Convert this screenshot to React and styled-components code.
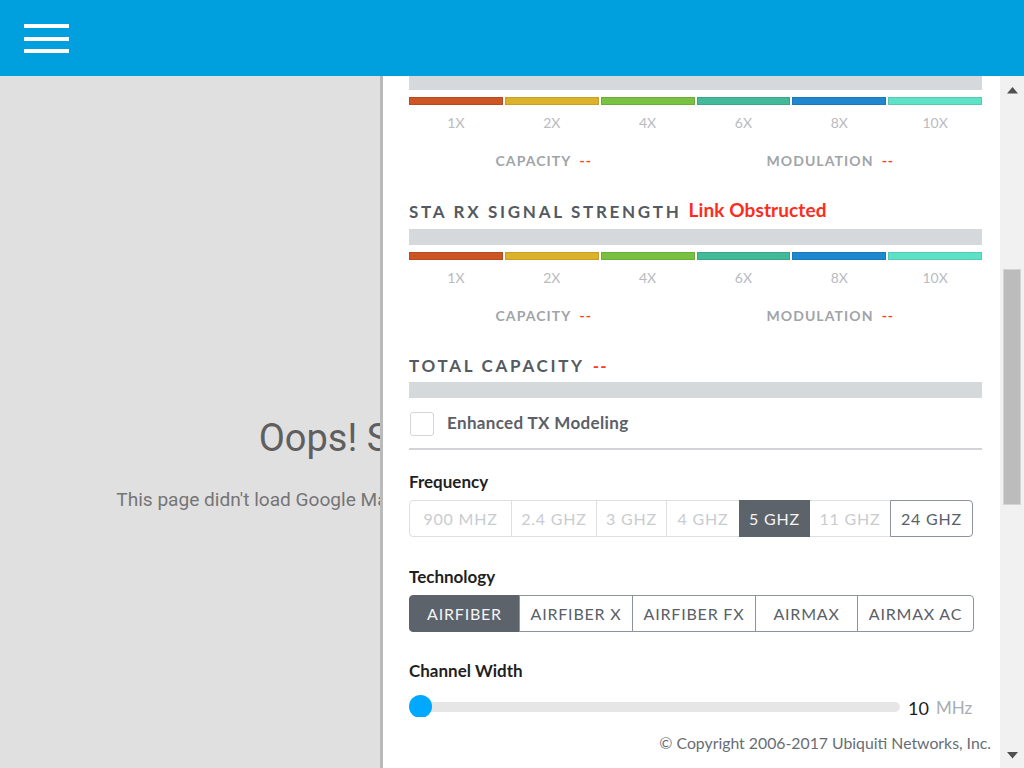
import React from 'react';
import styled, { createGlobalStyle } from 'styled-components';

const Global = createGlobalStyle`
  html, body { margin: 0; padding: 0; }
  body {
    width: 1024px; height: 768px; overflow: hidden;
    font-family: Lato, "Noto Sans", sans-serif;
    -webkit-font-smoothing: antialiased;
  }
  * { box-sizing: border-box; }
`;

const Page = styled.div`
  width: 1024px;
  height: 768px;
  display: flex;
  flex-direction: column;
  overflow: hidden;
  background: #e0e0e0;
`;

const TopBar = styled.header`
  flex: none;
  height: 76px;
  background: #009fde;
  padding: 24px 0 0 24px;
`;

const Burger = styled.div`
  display: flex;
  flex-direction: column;
  gap: 8.7px;
  width: 45px;
`;

const BurgerLine = styled.span`
  display: block;
  height: 4px;
  background: #ffffff;
`;

const Stage = styled.main`
  flex: 1;
  min-height: 0;
  display: flex;
`;

const MapView = styled.section`
  flex: none;
  width: 380px;
  overflow: hidden;
  background: #e0e0e0;
`;

const MapError = styled.div`
  width: 1024px;
  padding: 340px 0 0 0;
  display: flex;
  flex-direction: column;
  align-items: center;
  font-family: Roboto, "Liberation Sans", sans-serif;
  text-align: center;
`;

const MapTitle = styled.div`
  font-size: 38px;
  line-height: 44px;
  color: #5f5f5f;
  white-space: nowrap;
`;

const MapText = styled.div`
  margin: 28px 6px 0 0;
  font-size: 19.1px;
  line-height: 24px;
  color: #757575;
  white-space: nowrap;
`;

const Panel = styled.aside`
  flex: 1;
  min-width: 0;
  display: flex;
  background: #ffffff;
  border-left: 3px solid #bababa;
`;

const PanelBody = styled.div`
  flex: 1;
  min-width: 0;
  padding: 0 18px 0 26px;
  display: flex;
  flex-direction: column;
`;

const LevelBar = styled.div`
  flex: none;
  height: ${(p) => p.h}px;
  margin-top: ${(p) => p.mt || 0}px;
  background: #d6d9dc;
`;

const Segments = styled.div`
  margin-top: 7px;
  display: grid;
  grid-template-columns: repeat(6, 1fr);
  gap: 2px;
`;

const Segment = styled.div`
  height: 8px;
  background: ${(p) => p.c};
  box-shadow: inset 0 0 0 1px rgba(0, 0, 0, 0.1);
`;

const SegLabels = styled.div`
  margin-top: 8px;
  display: grid;
  grid-template-columns: repeat(6, 1fr);
  gap: 2px;
`;

const SegLabel = styled.div`
  font-size: 14px;
  line-height: 20px;
  color: #b8bbbf;
  text-align: center;
`;

const Metrics = styled.div`
  margin-top: 18px;
  display: grid;
  grid-template-columns: 1fr 1fr;
`;

const Metric = styled.div`
  display: flex;
  justify-content: center;
  align-items: baseline;
  padding-right: 17px;
  font-size: 14px;
  line-height: 20px;
  font-weight: 700;
  letter-spacing: 1.1px;
  color: #a0a4a9;
`;

const Dash = styled.span`
  margin-left: 8px;
  color: #ff3b1f;
  font-weight: 700;
  letter-spacing: 1px;
`;

const SectionTitle = styled.div`
  margin-top: ${(p) => p.mt}px;
  display: flex;
  align-items: baseline;
  height: 24px;
  line-height: 24px;
  font-size: 17px;
  font-weight: 700;
  letter-spacing: 2.7px;
  color: #545a61;
  white-space: nowrap;
`;

const Alert = styled.span`
  margin-left: 7px;
  font-size: 19px;
  letter-spacing: 0.1px;
  color: #ff2b1b;
  position: relative;
  top: -1px;
`;

const CheckRow = styled.label`
  margin-top: 14px;
  height: 24px;
  display: flex;
  align-items: center;
  gap: 13px;
  padding-left: 1px;
`;

const CheckText = styled.span`
  font-size: 17px;
  line-height: 20px;
  font-weight: 700;
  letter-spacing: 0.35px;
  color: #5b6067;
  margin-top: -3px;
`;

const CheckBox = styled.span`
  flex: none;
  width: 24px;
  height: 24px;
  border: 1px solid #d3d6d9;
  border-radius: 3px;
  background: #fff;
`;

const Divider = styled.hr`
  flex: none;
  margin: 12px 0 0;
  height: 2px;
  border: 0;
  background: #d2d4d7;
`;

const FieldLabel = styled.div`
  margin-top: ${(p) => p.mt}px;
  font-size: 17px;
  line-height: 24px;
  font-weight: 700;
  color: #1f1f1f;
`;

const Segmented = styled.div`
  margin-top: 6px;
  display: flex;
`;

const Option = styled.div`
  flex: none;
  width: ${(p) => p.w}px;
  height: 37px;
  display: flex;
  align-items: center;
  justify-content: center;
  font-size: 16px;
  letter-spacing: 0.8px;
  white-space: nowrap;
  border: 1px solid ${(p) => (p.active ? '#5c636b' : p.disabled ? '#dde0e3' : '#8e9399')};
  background: ${(p) => (p.active ? '#5c636b' : '#ffffff')};
  color: ${(p) => (p.active ? '#f4f4f4' : p.disabled ? '#c8ccd0' : '#5a6067')};
  z-index: ${(p) => (p.active || !p.disabled ? 1 : 0)};
  &:not(:first-child) { margin-left: -1px; }
  &:first-child { border-radius: 4px 0 0 4px; }
  &:last-child { border-radius: 0 4px 4px 0; }
`;

const SliderRow = styled.div`
  margin-top: 12px;
  height: 22px;
  display: flex;
  align-items: flex-start;
`;

const SliderBox = styled.div`
  position: relative;
  flex: none;
  width: 491px;
  height: 22px;
  overflow: hidden;
  padding-top: 7px;
`;

const Rail = styled.div`
  height: 10px;
  border-radius: 5px;
  background: #e6e6e6;
`;

const Knob = styled.div`
  position: absolute;
  left: 0;
  top: 0;
  width: 23px;
  height: 23px;
  border-radius: 50%;
  background: #00a8ff;
`;

const Value = styled.span`
  margin: 2px 0 0 8px;
  font-size: 18px;
  line-height: 22px;
  color: #1c1c1c;
`;

const Unit = styled.span`
  margin: 2px 0 0 7px;
  font-size: 17px;
  line-height: 22px;
  color: #a9adb2;
`;

const Copyright = styled.div`
  margin: 16px -9px 0 0;
  text-align: right;
  font-size: 15.8px;
  line-height: 20px;
  color: #676d74;
  white-space: nowrap;
`;

const ScrollTrack = styled.div`
  flex: none;
  width: 24px;
  background: #f1f1f1;
  display: flex;
  flex-direction: column;
  align-items: center;
`;

const ScrollBtn = styled.div`
  flex: none;
  height: ${(p) => p.h}px;
  width: 100%;
  display: flex;
  align-items: center;
  justify-content: center;
`;

const Thumb = styled.div`
  flex: none;
  width: 18px;
  height: 236px;
  margin-top: 165px;
  background: #bcbcbc;
  border: 1px solid #d4d4d4;
`;

const Spacer = styled.div`
  flex: 1;
`;

const Arrow = ({ down }) => (
  <svg width="11" height="7" viewBox="0 0 11 7">
    <path d={down ? 'M0 0 H11 L5.5 6.5 Z' : 'M0 6.5 H11 L5.5 0 Z'} fill="#505050" />
  </svg>
);

const colors = ['#cd5524', '#dcb22b', '#79c141', '#43b99a', '#1e87d0', '#5de2c8'];
const levels = ['1X', '2X', '4X', '6X', '8X', '10X'];

const Scale = () => (
  <>
    <Segments>
      {colors.map((c) => (
        <Segment key={c} c={c} />
      ))}
    </Segments>
    <SegLabels>
      {levels.map((l) => (
        <SegLabel key={l}>{l}</SegLabel>
      ))}
    </SegLabels>
    <Metrics>
      <Metric>
        CAPACITY<Dash>--</Dash>
      </Metric>
      <Metric>
        MODULATION<Dash>--</Dash>
      </Metric>
    </Metrics>
  </>
);

const freqs = [
  ['900 MHZ', 103, 'd'],
  ['2.4 GHZ', 86, 'd'],
  ['3 GHZ', 71, 'd'],
  ['4 GHZ', 74, 'd'],
  ['5 GHZ', 71, 'a'],
  ['11 GHZ', 82, 'd'],
  ['24 GHZ', 83, 'e'],
];

const techs = [
  ['AIRFIBER', 111, 'a'],
  ['AIRFIBER X', 114, 'e'],
  ['AIRFIBER FX', 124, 'e'],
  ['AIRMAX', 103, 'e'],
  ['AIRMAX AC', 117, 'e'],
];

const Group = ({ items }) => (
  <Segmented>
    {items.map(([t, w, s]) => (
      <Option key={t} w={w} active={s === 'a'} disabled={s === 'd'}>
        {t}
      </Option>
    ))}
  </Segmented>
);

export default function App() {
  return (
    <>
      <Global />
      <Page>
        <TopBar>
          <Burger>
            <BurgerLine />
            <BurgerLine />
            <BurgerLine />
          </Burger>
        </TopBar>
        <Stage>
          <MapView>
            <MapError>
              <MapTitle>Oops! Something went wrong.</MapTitle>
              <MapText>
                This page didn't load Google Maps correctly. See the JavaScript console for technical details.
              </MapText>
            </MapError>
          </MapView>
          <Panel>
            <PanelBody>
              <LevelBar h={14} />
              <Scale />
              <SectionTitle mt={28}>
                STA RX SIGNAL STRENGTH<Alert>Link Obstructed</Alert>
              </SectionTitle>
              <LevelBar h={16} mt={6} />
              <Scale />
              <SectionTitle mt={28}>
                TOTAL CAPACITY<Dash>--</Dash>
              </SectionTitle>
              <LevelBar h={16} mt={4} />
              <CheckRow>
                <CheckBox />
                <CheckText>Enhanced TX Modeling</CheckText>
              </CheckRow>
              <Divider />
              <FieldLabel mt={20}>Frequency</FieldLabel>
              <Group items={freqs} />
              <FieldLabel mt={28}>Technology</FieldLabel>
              <Group items={techs} />
              <FieldLabel mt={27}>Channel Width</FieldLabel>
              <SliderRow>
                <SliderBox>
                  <Rail />
                  <Knob />
                </SliderBox>
                <Value>10</Value>
                <Unit>MHz</Unit>
              </SliderRow>
              <Copyright>© Copyright 2006-2017 Ubiquiti Networks, Inc.</Copyright>
            </PanelBody>
            <ScrollTrack>
              <ScrollBtn h={28}>
                <Arrow />
              </ScrollBtn>
              <Thumb />
              <Spacer />
              <ScrollBtn h={26}>
                <Arrow down />
              </ScrollBtn>
            </ScrollTrack>
          </Panel>
        </Stage>
      </Page>
    </>
  );
}
